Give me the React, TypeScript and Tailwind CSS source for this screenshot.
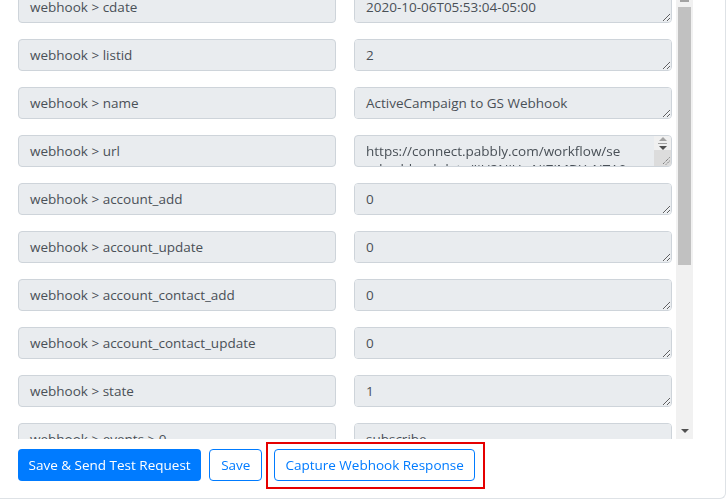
import { useState } from "react";

type Field = { label: string; value: string; scroll?: boolean };

const fields: Field[] = [
  { label: "webhook > cdate", value: "2020-10-06T05:53:04-05:00" },
  { label: "webhook > listid", value: "2" },
  { label: "webhook > name", value: "ActiveCampaign to GS Webhook" },
  {
    label: "webhook > url",
    value:
      "https://connect.pabbly.com/workflow/sendwebhookdata/IjU3NjUwNjZiMDYzNTA0MzI1MjZiNTUzNjUxMzci_pc",
    scroll: true,
  },
  { label: "webhook > account_add", value: "0" },
  { label: "webhook > account_update", value: "0" },
  { label: "webhook > account_contact_add", value: "0" },
  { label: "webhook > account_contact_update", value: "0" },
  { label: "webhook > state", value: "1" },
  { label: "webhook > events > 0", value: "subscribe" },
];

function Grip() {
  return (
    <svg width="9" height="9" viewBox="0 0 9 9" className="shrink-0">
      <path d="M8.5 1.5 L1.5 8.5 M8.5 5 L5 8.5" stroke="#555" strokeWidth="1" strokeDasharray="1 1" />
    </svg>
  );
}

function ScrollingValue({ value }: { value: string }) {
  return (
    <div className="w-[318px] h-[32px] shrink-0 flex bg-[#e9ecef] border border-[#ced4da] rounded-[4px] overflow-hidden">
      <div className="flex-1 overflow-hidden pl-[11px] pr-[27px] pt-[6px] leading-[18px] text-[13.5px] text-[#495057] break-all">
        {value}
      </div>
      <div className="w-[17px] h-full flex flex-col">
        <div className="h-[14px] bg-[#f0f0f0] flex flex-col items-center justify-center gap-[2px]">
          <div className="w-0 h-0 border-l-[4px] border-r-[4px] border-b-[4px] border-l-transparent border-r-transparent border-b-[#a3a3a3]" />
          <div className="w-[9px] h-px bg-[#a3a3a3]" />
          <div className="w-0 h-0 border-l-[4px] border-r-[4px] border-t-[4px] border-l-transparent border-r-transparent border-t-[#505050]" />
        </div>
        <div className="flex-1 bg-[#dcdcdc] flex items-end justify-end pr-[1px] pb-[1px]">
          <Grip />
        </div>
      </div>
    </div>
  );
}

function FieldRow({ field }: { field: Field }) {
  return (
    <div className="flex gap-[18px]">
      <div className="w-[318px] h-[32px] shrink-0 flex items-center px-[11px] bg-[#e9ecef] border border-[#ced4da] rounded-[4px] text-[13.5px] text-[#495057]">
        {field.label}
      </div>
      {field.scroll ? (
        <ScrollingValue value={field.value} />
      ) : (
        <textarea
          readOnly
          value={field.value}
          className="w-[318px] h-[32px] shrink-0 px-[11px] py-[5px] leading-[21px] bg-[#e9ecef] border border-[#ced4da] rounded-[4px] text-[13.5px] text-[#495057] outline-none"
        />
      )}
    </div>
  );
}

export default function App() {
  const [saved, setSaved] = useState(false);

  return (
    <div
      className="w-[726px] h-[500px] overflow-hidden bg-white"
      style={{ fontFamily: '"Segoe UI", "Open Sans", "Noto Sans", sans-serif' }}
    >
      <div className="w-[726px] h-[499px] border-r border-b border-[#dee2e6] rounded-br-[6px] flex flex-col">
        <div className="flex h-[439px] shrink-0">
          <div className="w-[676px] overflow-hidden pl-[18px]">
            <div className="flex flex-col gap-[16px] -mt-[9px]">
              {fields.map((f) => (
                <FieldRow key={f.label} field={f} />
              ))}
            </div>
          </div>
          {/* scrollbar */}
          <div className="w-[17px] h-full bg-[#f1f1f1] flex flex-col items-center">
            <div className="w-[9px] h-[2px] bg-[#a3a3a3]" />
            <div className="w-[13px] h-[258px] mt-[5px] bg-[#c1c1c1]" />
            <div className="flex-1" />
            <div className="w-0 h-0 mb-[6px] border-l-[4px] border-r-[4px] border-t-[4px] border-l-transparent border-r-transparent border-t-[#505050]" />
          </div>
        </div>
        <div className="flex items-start pl-[18px] pt-[3px] gap-[8px]">
          <button
            type="button"
            onClick={() => setSaved(true)}
            className="mt-[7px] h-[32px] px-[10.5px] rounded-[4px] bg-[#007bff] text-white text-[13.5px] font-medium"
          >
            Save &amp; Send Test Request
          </button>
          <button
            type="button"
            onClick={() => setSaved(!saved)}
            className="mt-[7px] h-[32px] px-[11px] rounded-[4px] border border-[#007bff] text-[#007bff] bg-white text-[13.5px]"
          >
            Save
          </button>
          <div className="-ml-[4px] border-2 border-[#e50000] pt-[5px] pb-[6px] pl-[6px] pr-[8px]">
            <button
              type="button"
              className="h-[32px] px-[10px] rounded-[4px] border border-[#007bff] text-[#007bff] bg-white text-[13.5px]"
            >
              Capture Webhook Response
            </button>
          </div>
        </div>
      </div>
    </div>
  );
}
